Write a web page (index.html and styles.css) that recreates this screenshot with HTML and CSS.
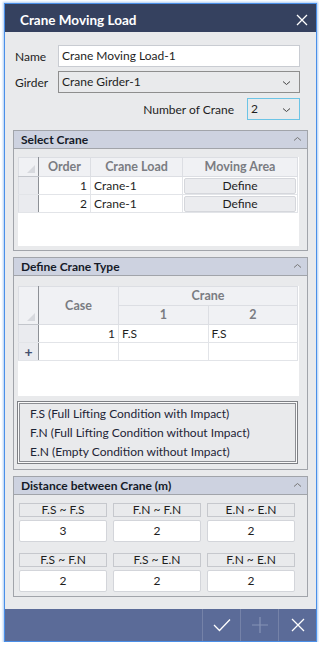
FILE: index.html
```html
<!DOCTYPE html>
<html lang="en">
<head>
    <meta charset="UTF-8">
    <meta name="viewport" content="width=device-width, initial-scale=1.0">
    <title>Crane Moving Load</title>
    <link rel="stylesheet" href="styles.css">
</head>
<body>
    <div class="window">
        <div class="titlebar">
            <span class="title">Crane Moving Load</span>
            <svg class="close" width="12" height="12" viewBox="0 0 12 12"><path d="M1 1L11 11M11 1L1 11" stroke="#fff" stroke-width="1.3"/></svg>
        </div>

        <div class="content">
            <div class="form-row">
                <label>Name</label>
                <div class="field">Crane Moving Load-1</div>
            </div>
            <div class="form-row">
                <label>Girder</label>
                <div class="field select">Crane Girder-1
                    <svg class="chev" width="9" height="6" viewBox="0 0 9 6"><path d="M1 1.5L4.5 4.5L8 1.5" fill="none" stroke="#444" stroke-width="1"/></svg>
                </div>
            </div>
            <div class="form-row count-row">
                <label>Number of Crane</label>
                <div class="field select focused">2
                    <svg class="chev" width="9" height="6" viewBox="0 0 9 6"><path d="M1 1.5L4.5 4.5L8 1.5" fill="none" stroke="#444" stroke-width="1"/></svg>
                </div>
            </div>

            <!-- Select Crane -->
            <section class="panel">
                <div class="panel-head">Select Crane
                    <svg class="up" width="9" height="6" viewBox="0 0 9 6"><path d="M1 4.5L4.5 1.5L8 4.5" fill="none" stroke="#777" stroke-width="1"/></svg>
                </div>
                <div class="panel-body body-select">
                    <div class="grid grid-select">
                        <table>
                            <tr class="hdr">
                                <th class="corner"><span class="tri"></span></th>
                                <th class="c-order">Order</th>
                                <th class="c-load">Crane Load</th>
                                <th>Moving Area</th>
                            </tr>
                            <tr>
                                <td class="rh"></td>
                                <td class="num">1</td>
                                <td>Crane-1</td>
                                <td class="btn-cell"><span class="btn">Define</span></td>
                            </tr>
                            <tr>
                                <td class="rh"></td>
                                <td class="num">2</td>
                                <td>Crane-1</td>
                                <td class="btn-cell"><span class="btn">Define</span></td>
                            </tr>
                        </table>
                    </div>
                </div>
            </section>

            <!-- Define Crane Type -->
            <section class="panel">
                <div class="panel-head">Define Crane Type
                    <svg class="up" width="9" height="6" viewBox="0 0 9 6"><path d="M1 4.5L4.5 1.5L8 4.5" fill="none" stroke="#777" stroke-width="1"/></svg>
                </div>
                <div class="panel-body body-type">
                    <div class="grid grid-type">
                        <table>
                            <tr class="hdr">
                                <th class="corner" rowspan="2"><span class="tri"></span></th>
                                <th class="c-case" rowspan="2">Case</th>
                                <th colspan="2">Crane</th>
                            </tr>
                            <tr class="hdr">
                                <th class="c-crane">1</th>
                                <th>2</th>
                            </tr>
                            <tr>
                                <td class="rh"></td>
                                <td class="num">1</td>
                                <td>F.S</td>
                                <td>F.S</td>
                            </tr>
                            <tr class="new-row">
                                <td class="rh plus">+</td>
                                <td></td>
                                <td></td>
                                <td></td>
                            </tr>
                        </table>
                    </div>
                    <div class="legend">
                        <div class="legend-inner">
                            <p>F.S (Full Lifting Condition with Impact)</p>
                            <p>F.N (Full Lifting Condition without Impact)</p>
                            <p>E.N (Empty Condition without Impact)</p>
                        </div>
                    </div>
                </div>
            </section>

            <!-- Distance between Crane -->
            <section class="panel">
                <div class="panel-head">Distance between Crane (m)
                    <svg class="up" width="9" height="6" viewBox="0 0 9 6"><path d="M1 4.5L4.5 1.5L8 4.5" fill="none" stroke="#777" stroke-width="1"/></svg>
                </div>
                <div class="panel-body dist">
                    <div class="dist-grid">
                        <div class="dist-label">F.S ~ F.S</div>
                        <div class="dist-label">F.N ~ F.N</div>
                        <div class="dist-label">E.N ~ E.N</div>
                        <div class="dist-value">3</div>
                        <div class="dist-value">2</div>
                        <div class="dist-value">2</div>
                    </div>
                    <div class="dist-grid">
                        <div class="dist-label">F.S ~ F.N</div>
                        <div class="dist-label">F.S ~ E.N</div>
                        <div class="dist-label">F.N ~ E.N</div>
                        <div class="dist-value">2</div>
                        <div class="dist-value">2</div>
                        <div class="dist-value">2</div>
                    </div>
                </div>
            </section>
        </div>

        <div class="footer">
            <button class="fbtn">
                <svg width="18" height="14" viewBox="0 0 18 14"><path d="M1 7L6.5 12.5L17 1.5" fill="none" stroke="#fff" stroke-width="1.3"/></svg>
            </button>
            <button class="fbtn">
                <svg width="16" height="16" viewBox="0 0 16 16"><path d="M8 0V16M0 8H16" stroke="#8693b6" stroke-width="1.2"/></svg>
            </button>
            <button class="fbtn">
                <svg width="14" height="14" viewBox="0 0 14 14"><path d="M1 1L13 13M13 1L1 13" stroke="#fff" stroke-width="1.3"/></svg>
            </button>
        </div>
    </div>
</body>
</html>
```

FILE: styles.css
```css
body {
    margin: 0;
    padding: 0;
    background-color: #fff;
    font-family: Lato, "Open Sans", sans-serif;
    font-size: 12px;
    color: #1e1e1e;
}
.window {
    margin: 3px 0 0 4px;
    width: 311px;
    height: 637px;
    border: 1px solid #4a8fe8;
    box-shadow: 0 0 2px 1px #aecdf5;
    background-color: #e9eaec;
    display: flex;
    flex-direction: column;
}
.titlebar {
    flex-shrink: 0;
    height: 28px;
    box-sizing: border-box;
    background-color: #35415f;
    color: #fff;
    display: flex;
    align-items: center;
    justify-content: space-between;
    padding: 3px 8px 0 15px;
}
.title {
    font-weight: bold;
    font-size: 13.5px;
}
.content {
    flex: 1;
    min-height: 0;
    padding: 13px 8px 0 8px;
}
.form-row {
    display: flex;
    align-items: center;
    margin-bottom: 4px;
    padding-left: 2px;
    padding-right: 8px;
}
.form-row label {
    width: 43px;
}
.field {
    flex: 1;
    height: 20px;
    line-height: 20px;
    background-color: #fff;
    border: 1px solid #c9ccd2;
    padding: 0 3px;
    position: relative;
}
.select {
    background-color: #e9eaec;
    border-color: #8e8e8e;
}
.chev {
    position: absolute;
    right: 8px;
    top: 8px;
}
.count-row {
    justify-content: flex-end;
    margin-top: 5px;
    margin-bottom: 10px;
}
.count-row label {
    width: auto;
    margin-right: 13px;
}
.count-row .field {
    flex: 0 0 auto;
    width: 48px;
    padding: 0 0 0 3px;
}
.focused {
    border-color: #6cc4e6;
}
.panel {
    border: 1px solid #a1a4aa;
    margin-bottom: 6px;
}
.panel-head {
    height: 17px;
    line-height: 17px;
    background-color: #cdd2e0;
    border-bottom: 1px solid #a1a4aa;
    font-weight: bold;
    padding-left: 7px;
    position: relative;
    color: #151a28;
}
.up {
    position: absolute;
    right: 5px;
    top: 5px;
}
.panel-body {
    padding: 8px 8px 4px 4px;
}
.body-type {
    padding-top: 10px;
    padding-bottom: 5px;
}
.grid {
    background-color: #fff;
}
.grid-select {
    height: 89px;
}
.grid-type {
    height: 110px;
}
table {
    border-collapse: collapse;
    width: 280px;
    table-layout: fixed;
}
th {
    height: 18px;
    line-height: 16px;
    background-color: #f0f1f4;
    border: 1px solid #dcdee3;
    color: #7a7c82;
    font-weight: bold;
    font-size: 12.5px;
    padding: 0;
}
td {
    height: 17px;
    line-height: 15px;
    border: 1px solid #e2e4e8;
    padding: 0 3px;
    white-space: nowrap;
}
.corner {
    width: 19px;
    position: relative;
    border-right: 1px solid #8d9096;
    border-bottom: 1px solid #c2c5cb;
}
.tri {
    position: absolute;
    right: 3px;
    bottom: 3px;
    width: 0;
    height: 0;
    border-left: 8px solid transparent;
    border-bottom: 8px solid #d7d9de;
}
.c-order {
    width: 51px;
}
.c-load {
    width: 91px;
}
.rh {
    background-color: #eaebef;
    border-right: 1px solid #8d9096;
    border-left: 1px solid #dcdee3;
}
.num {
    text-align: right;
}
.btn-cell {
    padding: 0 1px;
}
.btn {
    display: block;
    height: 14px;
    line-height: 14px;
    background-color: #ebecef;
    border: 1px solid #d5d7dc;
    border-radius: 2px;
    text-align: center;
}
.c-case {
    width: 79px;
}
.c-crane {
    width: 90px;
}
.plus {
    color: #44506e;
    font-weight: bold;
    font-size: 14px;
    text-align: center;
}
.legend {
    margin-top: 5px;
    border: 1px solid #7d7f84;
    padding: 1px;
    background-color: #fafafa;
    margin-right: 1px;
    margin-left: -1px;
}
.legend-inner {
    border: 1px solid #8c8e93;
    background-color: #e9eaec;
    padding: 0 0 0 10px;
}
.legend-inner p {
    margin: 0;
    height: 19px;
    line-height: 19px;
    color: #1d2436;
}
.dist {
    padding: 8px 12px 4px 5px;
}
.dist-grid {
    display: grid;
    grid-template-columns: repeat(3, 1fr);
    column-gap: 6px;
    row-gap: 3px;
    margin-bottom: 11px;
}
.dist-grid:last-child {
    margin-bottom: 0;
}
.dist-label {
    height: 12px;
    line-height: 12px;
    text-align: center;
    background-color: #e9eaec;
    border: 1px solid #c6c8cd;
}
.dist-value {
    height: 20px;
    line-height: 20px;
    text-align: center;
    background-color: #fff;
    border: 1px solid #d3d5da;
    border-radius: 2px;
}
.footer {
    flex-shrink: 0;
    height: 32px;
    background-color: #5b6b98;
    display: flex;
    justify-content: flex-end;
}
.fbtn {
    width: 38px;
    height: 32px;
    border: 0;
    border-left: 1px solid #7582a8;
    background: transparent;
    padding: 0;
    display: flex;
    align-items: center;
    justify-content: center;
}
```
